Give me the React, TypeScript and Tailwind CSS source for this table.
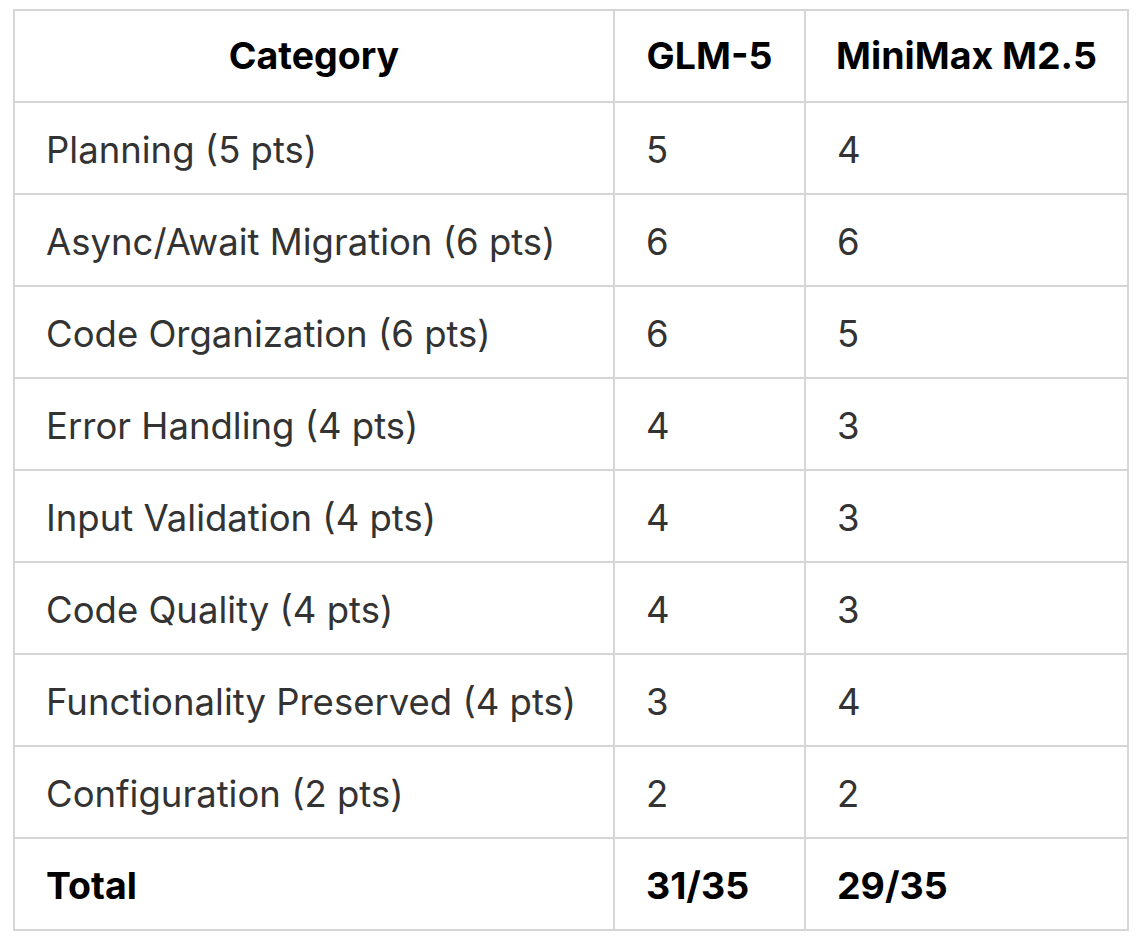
import React from "react";

const rows: [string, string, string][] = [
  ["Planning (5 pts)", "5", "4"],
  ["Async/Await Migration (6 pts)", "6", "6"],
  ["Code Organization (6 pts)", "6", "5"],
  ["Error Handling (4 pts)", "4", "3"],
  ["Input Validation (4 pts)", "4", "3"],
  ["Code Quality (4 pts)", "4", "3"],
  ["Functionality Preserved (4 pts)", "3", "4"],
  ["Configuration (2 pts)", "2", "2"],
];

const App = () => {
  return (
    <div className="w-[1144px] h-[946px] bg-white pt-[9px] pl-[13px] font-['Inter','Helvetica_Neue',Arial,sans-serif]">
      <table className="w-[1114px] table-fixed border-collapse">
        <colgroup>
          <col className="w-[600px]" />
          <col className="w-[191px]" />
          <col className="w-[323px]" />
        </colgroup>
        <thead>
          {/* Header */}
          <tr className="h-[92px]">
            <th className="border-2 border-[#d6d6d6] text-center text-[37.5px] font-bold text-black">Category</th>
            <th className="border-2 border-[#d6d6d6] text-center text-[37.5px] font-bold text-black">GLM-5</th>
            <th className="border-2 border-[#d6d6d6] text-center text-[37.5px] font-bold text-black">MiniMax M2.5</th>
          </tr>
        </thead>
        <tbody>
          {rows.map(([cat, glm, mm]) => (
            <tr key={cat} className="h-[92px]">
              <td className="border-2 border-[#d6d6d6] px-[31px] pt-[4px] text-[36.5px] text-[#333333]">{cat}</td>
              <td className="border-2 border-[#d6d6d6] px-[31px] pt-[4px] text-[36.5px] text-[#333333]">{glm}</td>
              <td className="border-2 border-[#d6d6d6] px-[31px] pt-[4px] text-[36.5px] text-[#333333]">{mm}</td>
            </tr>
          ))}
          <tr className="h-[92px]">
            <td className="border-2 border-[#d6d6d6] px-[31px] pt-[4px] text-[37.5px] font-bold text-black">Total</td>
            <td className="border-2 border-[#d6d6d6] px-[31px] pt-[4px] text-[37.5px] font-bold text-black">31/35</td>
            <td className="border-2 border-[#d6d6d6] px-[31px] pt-[4px] text-[37.5px] font-bold text-black">29/35</td>
          </tr>
        </tbody>
      </table>
    </div>
  );
};

export default App;
